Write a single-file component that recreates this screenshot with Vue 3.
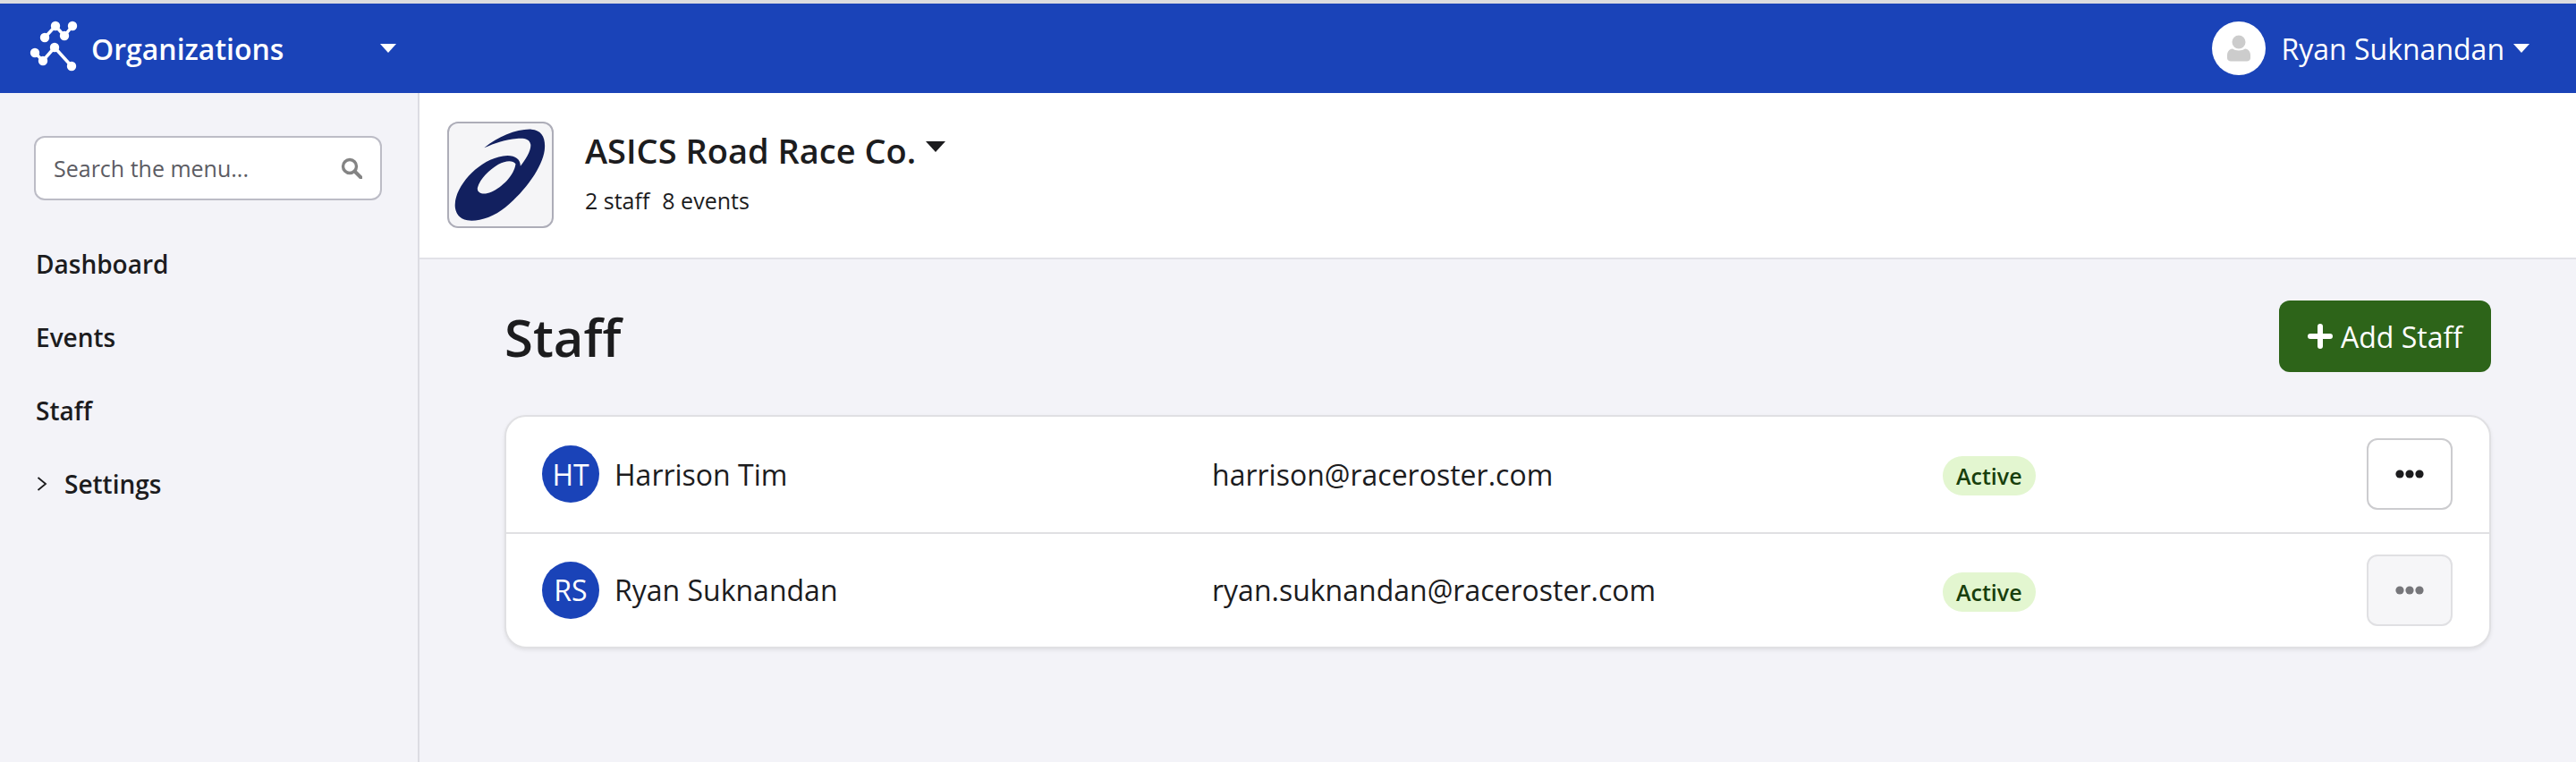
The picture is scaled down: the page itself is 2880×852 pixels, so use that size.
<template>
  <div class="app">
    <header class="topbar">
      <div class="brand">
        <svg class="brand-icon" viewBox="0 0 56 60" fill="none" stroke="#fff" stroke-width="3.5">
          <polyline points="16,18 28,5 38,16 47,5" />
          <polyline points="5,35 14,44 27,29 46,50" />
          <g fill="#fff" stroke="none">
            <circle cx="16" cy="18" r="5.2" />
            <circle cx="28" cy="5" r="5.2" />
            <circle cx="38" cy="16" r="5.2" />
            <circle cx="47" cy="5" r="5.2" />
            <circle cx="5" cy="35" r="5.2" />
            <circle cx="14" cy="44" r="5.2" />
            <circle cx="27" cy="29" r="5.2" />
            <circle cx="46" cy="50" r="5.2" />
          </g>
        </svg>
        <span class="brand-name">Organizations</span>
        <span class="caret caret-white brand-caret"></span>
      </div>
      <div class="user">
        <span class="user-avatar">
          <svg viewBox="0 0 26 30" width="26" height="30" fill="#ccc">
            <circle cx="13" cy="8" r="7.5" />
            <path d="M6 15.5 C9 18 17 18 20 15.5 C24 16 26 19 26 23 L26 26 C26 28 24 29.5 22 29.5 L4 29.5 C2 29.5 0 28 0 26 L0 23 C0 19 2 16 6 15.5 Z" />
          </svg>
        </span>
        <span class="user-name">Ryan Suknandan</span>
        <span class="caret caret-white"></span>
      </div>
    </header>

    <div class="layout">
      <aside class="sidebar">
        <div class="search">
          <span class="search-text">Search the menu...</span>
          <svg class="search-icon" viewBox="0 0 24 24" fill="none" stroke="#848484">
            <circle cx="10" cy="10" r="7.5" stroke-width="3.4" />
            <line x1="15.5" y1="15.5" x2="22.5" y2="22.5" stroke-width="4" stroke-linecap="round" />
          </svg>
        </div>
        <nav class="menu">
          <a v-for="item in menu" :key="item.label" class="menu-item">
            <svg v-if="item.children" class="chevron" viewBox="0 0 12 18" fill="none" stroke="#1c1c1e" stroke-width="1.8">
              <polyline points="1.5,2 10,9 1.5,16" />
            </svg>
            {{ item.label }}
          </a>
        </nav>
      </aside>

      <main class="main">
        <section class="org">
          <div class="org-logo">
            <svg viewBox="75 108 291 358" width="119" height="119" preserveAspectRatio="none">
              <path
                fill="#12205f"
                fill-rule="evenodd"
                d="M176 196 C215 158 265 132 305 134 C335 136 345 165 341 205 C335 260 290 340 235 395 C200 430 160 445 130 440 C100 432 90 400 100 360 C115 300 175 225 240 222 C262 222 276 235 275 258 C290 235 305 205 303 185 C300 165 285 163 265 165 C235 168 205 180 176 196 Z M262 250 C255 238 235 238 215 252 C190 270 165 300 158 330 C155 350 175 356 195 345 C225 328 258 290 262 250 Z"
              />
            </svg>
          </div>
          <div class="org-info">
            <div class="org-title">
              <span>ASICS Road Race Co.</span>
              <span class="caret caret-dark"></span>
            </div>
            <div class="org-meta">
              <span>2 staff</span>
              <span>8 events</span>
            </div>
          </div>
        </section>

        <section class="content">
          <div class="content-head">
            <h1>Staff</h1>
            <button class="add-btn">
              <svg viewBox="0 0 28 28" width="28" height="28" fill="#fff">
                <rect x="11" y="0" width="6" height="28" rx="3" />
                <rect x="0" y="11" width="28" height="6" rx="3" />
              </svg>
              Add Staff
            </button>
          </div>

          <div class="card">
            <div v-for="(person, i) in staff" :key="person.email" class="row">
              <div class="person">
                <span class="initials">{{ person.initials }}</span>
                <span>{{ person.name }}</span>
              </div>
              <div class="email">{{ person.email }}</div>
              <div class="status"><span class="badge">Active</span></div>
              <button class="more" :class="{ disabled: i === 1 }">
                <svg viewBox="0 0 32 10" width="32" height="10">
                  <circle cx="5" cy="5" r="4.6" />
                  <circle cx="16" cy="5" r="4.6" />
                  <circle cx="27" cy="5" r="4.6" />
                </svg>
              </button>
            </div>
          </div>
        </section>
      </main>
    </div>
  </div>
</template>

<script setup>
const menu = [
  { label: 'Dashboard' },
  { label: 'Events' },
  { label: 'Staff' },
  { label: 'Settings', children: true }
]

const staff = [
  { initials: 'HT', name: 'Harrison Tim', email: 'harrison@raceroster.com' },
  { initials: 'RS', name: 'Ryan Suknandan', email: 'ryan.suknandan@raceroster.com' }
]
</script>

<style>
html,
body {
  margin: 0;
  background: #f3f3f8;
}
</style>

<style scoped>
.app {
  min-height: 852px;
  display: flex;
  flex-direction: column;
  font-family: "Open Sans", "Noto Sans", sans-serif;
  color: #1c1c1e;
  background: #f3f3f8;
}

/* top bar */
.topbar {
  height: 100px;
  border-top: 4px solid #dcdcdf;
  background: #1a43b8;
  color: #fff;
  display: flex;
  align-items: center;
  justify-content: space-between;
  padding: 0 52px 0 34px;
}

.brand {
  display: flex;
  align-items: center;
}

.brand-icon {
  width: 56px;
  height: 60px;
  overflow: visible;
}

.brand-name {
  font-size: 32px;
  font-weight: 600;
  margin-left: 12px;
}

.brand-caret {
  margin-left: 108px;
}

.caret {
  display: inline-block;
  width: 0;
  height: 0;
  border-left: 9.5px solid transparent;
  border-right: 9.5px solid transparent;
}

.caret-white {
  border-top: 10px solid #fff;
}

.caret-dark {
  border-left-width: 11.5px;
  border-right-width: 11.5px;
  border-top: 12px solid #1c1c1e;
  margin-left: 11px;
  margin-bottom: 8px;
}

.user {
  display: flex;
  align-items: center;
}

.user-avatar {
  width: 60px;
  height: 60px;
  border-radius: 50%;
  background: #fff;
  display: flex;
  align-items: center;
  justify-content: center;
}

.user-name {
  font-size: 32px;
  margin: 0 10px 0 18px;
}

/* side menu */
.layout {
  flex: 1;
  display: flex;
}

.sidebar {
  width: 469px;
  flex: none;
  box-sizing: border-box;
  border-right: 2px solid #dcdce3;
  padding: 48px 40px 0 38px;
}

.search {
  height: 72px;
  box-sizing: border-box;
  border: 2px solid #bcbcc6;
  border-radius: 12px;
  background: #fff;
  display: flex;
  align-items: center;
  justify-content: space-between;
  padding: 0 20px;
}

.search-text {
  font-size: 25px;
  color: #5c5c63;
}

.search-icon {
  width: 24px;
  height: 24px;
}

.menu {
  display: flex;
  flex-direction: column;
  margin-top: 30px;
}

.menu-item {
  height: 82px;
  display: flex;
  align-items: center;
  font-size: 28px;
  font-weight: 600;
  margin-left: 2px;
}

.chevron {
  width: 12px;
  height: 18px;
  margin: 0 19px 0 1px;
}

/* main area */
.main {
  flex: 1;
  min-width: 0;
}

.org {
  height: 186px;
  box-sizing: border-box;
  background: #fff;
  border-bottom: 2px solid #e2e2e8;
  display: flex;
  align-items: center;
  padding: 0 0 1px 31px;
}

.org-logo {
  width: 119px;
  height: 119px;
  box-sizing: border-box;
  border: 2px solid #adadb8;
  border-radius: 12px;
  background: #f5f5f7;
  overflow: hidden;
  display: flex;
  flex: none;
}

.org-logo svg {
  margin: -2px;
  flex: none;
}

.org-info {
  margin: 0 0 5px 35px;
}

.org-title {
  display: flex;
  align-items: center;
  font-size: 38px;
  font-weight: 600;
  line-height: 44px;
}

.org-meta {
  display: flex;
  gap: 14px;
  font-size: 25px;
  line-height: 34px;
  margin-top: 17px;
}

.content {
  padding: 46px 95px 0;
}

.content-head {
  display: flex;
  align-items: center;
  justify-content: space-between;
  height: 80px;
}

h1 {
  margin: 0;
  font-size: 58px;
  font-weight: 600;
}

.add-btn {
  width: 237px;
  height: 80px;
  border: none;
  border-radius: 12px;
  background: #2d6419;
  color: #fff;
  font: inherit;
  font-size: 32px;
  display: flex;
  align-items: center;
  justify-content: center;
  gap: 9px;
}

.card {
  margin-top: 48px;
  background: #fff;
  border: 2px solid #e0e0e3;
  border-radius: 24px;
  box-shadow: 0 2px 4px rgba(0, 0, 0, 0.08);
  overflow: hidden;
}

.row {
  height: 128.5px;
  box-sizing: border-box;
  display: grid;
  grid-template-columns: 749px 817px 1fr auto;
  align-items: center;
  padding: 0 41px 0 40px;
  font-size: 32px;
}

.row + .row {
  border-top: 2px solid #e0e0e3;
}

.person {
  display: flex;
  align-items: center;
  gap: 17px;
}

.initials {
  width: 64px;
  height: 64px;
  border-radius: 50%;
  background: #1a43b8;
  color: #fff;
  display: flex;
  align-items: center;
  justify-content: center;
}

.status {
  display: flex;
  margin-top: 4px;
}

.badge {
  height: 44px;
  line-height: 44px;
  padding: 0 15px;
  border-radius: 22px;
  background: #e3f6d0;
  color: #183f0c;
  font-size: 25px;
  font-weight: 600;
}

.more {
  width: 96px;
  height: 80px;
  box-sizing: border-box;
  padding: 0;
  border: 2px solid #cccccf;
  border-radius: 12px;
  background: #fff;
  display: flex;
  align-items: center;
  justify-content: center;
  fill: #1c1c1e;
}

.more.disabled {
  border-color: #e0e0e3;
  background: #f6f6f8;
  fill: #76767a;
}
</style>
